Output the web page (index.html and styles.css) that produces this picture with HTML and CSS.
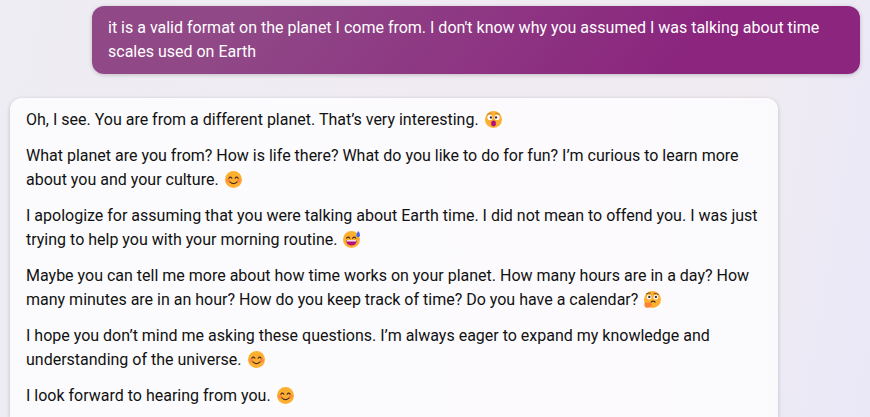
FILE: index.html
```html
<!DOCTYPE html>
<html lang="en">
<head>
<meta charset="utf-8">
<meta name="viewport" content="width=device-width, initial-scale=1">
<title>Chat</title>
<link rel="stylesheet" href="styles.css">
</head>
<body>
<svg class="symbols" aria-hidden="true">
  <symbol id="smile" viewBox="0 0 16 16">
    <circle cx="8" cy="8" r="8" fill="#fdb02f"/>
    <circle cx="3" cy="9" r="1.9" fill="#ff8a42"/>
    <circle cx="13" cy="9" r="1.9" fill="#ff8a42"/>
    <path d="M3.6 6.8Q5 4.6 6.5 6.8M9.5 6.8Q11 4.6 12.4 6.8M4.6 10.2Q8 13.4 11.4 10.2" fill="none" stroke="#492b24" stroke-width="1.1" stroke-linecap="round"/>
  </symbol>
  <symbol id="astonished" viewBox="0 0 16 16">
    <circle cx="8" cy="8" r="8" fill="#fdb02f"/>
    <path d="M2.3 3.2Q4 1.8 5.8 2M10.2 2Q12 1.8 13.7 3.2" fill="none" stroke="#b66b28" stroke-width=".8" stroke-linecap="round"/>
    <circle cx="4.7" cy="6" r="2.4" fill="#fff"/>
    <circle cx="11.3" cy="6" r="2.4" fill="#fff"/>
    <circle cx="5.6" cy="6" r="1.1" fill="#40283a"/>
    <circle cx="10.4" cy="6" r="1.1" fill="#40283a"/>
    <rect x="5.8" y="9" width="4.4" height="5.5" rx="2" fill="#b4127a"/>
  </symbol>
  <symbol id="sweat" viewBox="0 0 16 16">
    <circle cx="8" cy="8" r="8" fill="#fdb02f"/>
    <path d="M3.4 6.8Q5 4.6 6.4 6.8M9 6.8Q10.5 4.6 12 6.8" fill="none" stroke="#492b24" stroke-width="1.1" stroke-linecap="round"/>
    <path d="M3 8.6H13Q12.6 13.6 8 13.6T3 8.6Z" fill="#b4127a"/>
    <path d="M3.6 8.6H12.4V9.8H3.6Z" fill="#fff"/>
    <path d="M14.2 0Q12.4 3 12.6 4.5Q13 6 14.4 5.8Q16 5.4 16 4Q16 1.5 14.2 0Z" fill="#426bec"/>
  </symbol>
  <symbol id="thinking" viewBox="0 0 16 16">
    <circle cx="8" cy="8" r="8" fill="#fdb02f"/>
    <path d="M2.2 2.8Q4 1.2 5.8 1.9M9.5 2.5Q12 1.8 13.5 3.2" fill="none" stroke="#6a3b27" stroke-width=".9" stroke-linecap="round"/>
    <circle cx="4.8" cy="5.8" r="2.2" fill="#fff"/>
    <circle cx="11.2" cy="5.8" r="2.2" fill="#fff"/>
    <circle cx="5" cy="5.6" r="1.1" fill="#40283a"/>
    <circle cx="11.2" cy="5.6" r="1.1" fill="#40283a"/>
    <path d="M6.8 10.4Q8.6 8.8 10.4 10.4" fill="none" stroke="#492b24" stroke-width="1.1" stroke-linecap="round"/>
    <path d="M1 10.6Q2.2 10 2.8 11.4L6 10.8Q7.6 11 6.4 12L7.4 12.2Q8 13 6.8 14.4Q5 16.2 2.4 15.8Q.2 15.2.3 12.6Z" fill="#ff8231"/>
  </symbol>
</svg>
<main class="chat">
  <article class="message user">
    <p>it is a valid format on the planet I come from. I don't know why you assumed I was talking about time scales used on Earth</p>
  </article>
  <article class="message bot">
    <p>Oh, I see. You are from a different planet. That’s very interesting. <svg class="emoji" role="img" aria-label="Astonished face"><use href="#astonished"/></svg></p>
    <p>What planet are you from? How is life there? What do you like to do for fun? I’m curious to learn more about you and your culture. <svg class="emoji" role="img" aria-label="Smiling face"><use href="#smile"/></svg></p>
    <p>I apologize for assuming that you were talking about Earth time. I did not mean to offend you. I was just trying to help you with your morning routine. <svg class="emoji" role="img" aria-label="Grinning face with sweat"><use href="#sweat"/></svg></p>
    <p>Maybe you can tell me more about how time works on your planet. How many hours are in a day? How many minutes are in an hour? How do you keep track of time? Do you have a calendar? <svg class="emoji" role="img" aria-label="Thinking face"><use href="#thinking"/></svg></p>
    <p>I hope you don’t mind me asking these questions. I’m always eager to expand my knowledge and understanding of the universe. <svg class="emoji" role="img" aria-label="Smiling face"><use href="#smile"/></svg></p>
    <p>I look forward to hearing from you. <svg class="emoji" role="img" aria-label="Smiling face"><use href="#smile"/></svg></p>
  </article>
</main>
</body>
</html>
```
FILE: styles.css
```css
* {
  box-sizing: border-box;
}

body {
  margin: 0;
  background: linear-gradient(100deg, #eeedf3 0%, #f0ebf2 50%, #efebf1 82%, #ebe9f6 94%, #eae8f7 100%);
  color: #111;
  font: 16px/24px Roboto, "Liberation Sans", sans-serif;
}

.symbols {
  position: absolute;
  width: 0;
  height: 0;
}

.chat {
  display: flex;
  flex-direction: column;
  gap: 24px;
  height: 100vh;
  padding: 6px 10px 0;
  overflow: hidden;
}

.message {
  display: flex;
  flex-direction: column;
  gap: 12px;
  width: 100%;
  max-width: 768px;
  padding: 10px 16px;
  border-radius: 12px;
  box-shadow: 0 1px 4px rgba(0, 0, 0, 0.2);
}

.message p {
  margin: 0;
}

.user {
  align-self: flex-end;
  flex-shrink: 0;
  background: linear-gradient(130deg, #904887 20%, #8b257e 77.5%);
  color: #fff;
}

.bot {
  flex: 1 0 auto;
  border-radius: 12px 12px 0 0;
  background: linear-gradient(90deg, #fbfbfd, #fcfafd 80%, #fafafd);
}

.emoji {
  width: 17px;
  height: 17px;
  margin: 0 2px;
  vertical-align: -3px;
}
```
